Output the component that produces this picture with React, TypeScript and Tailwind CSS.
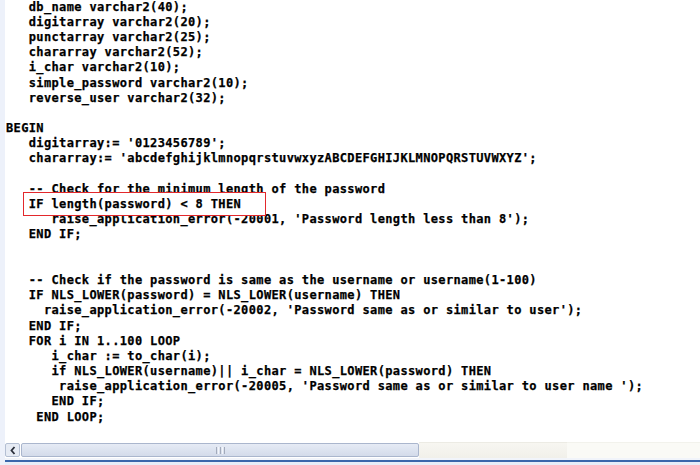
import React from 'react';

type Line = { indent: number; text: string; boxed?: boolean };

const lines: Line[] = [
  { indent: 3, text: 'db_name varchar2(40);' },
  { indent: 3, text: 'digitarray varchar2(20);' },
  { indent: 3, text: 'punctarray varchar2(25);' },
  { indent: 3, text: 'chararray varchar2(52);' },
  { indent: 3, text: 'i_char varchar2(10);' },
  { indent: 3, text: 'simple_password varchar2(10);' },
  { indent: 3, text: 'reverse_user varchar2(32);' },
  { indent: 0, text: '' },
  { indent: 0, text: 'BEGIN' },
  { indent: 3, text: "digitarray:= '0123456789';" },
  { indent: 3, text: "chararray:= 'abcdefghijklmnopqrstuvwxyzABCDEFGHIJKLMNOPQRSTUVWXYZ';" },
  { indent: 0, text: '' },
  { indent: 3, text: '-- Check for the minimum length of the password' },
  { indent: 3, text: 'IF length(password) < 8 THEN', boxed: true },
  { indent: 6, text: "raise_application_error(-20001, 'Password length less than 8');" },
  { indent: 3, text: 'END IF;' },
  { indent: 0, text: '' },
  { indent: 0, text: '' },
  { indent: 3, text: '-- Check if the password is same as the username or username(1-100)' },
  { indent: 3, text: 'IF NLS_LOWER(password) = NLS_LOWER(username) THEN' },
  { indent: 5, text: "raise_application_error(-20002, 'Password same as or similar to user');" },
  { indent: 3, text: 'END IF;' },
  { indent: 3, text: 'FOR i IN 1..100 LOOP' },
  { indent: 6, text: 'i_char := to_char(i);' },
  { indent: 6, text: 'if NLS_LOWER(username)|| i_char = NLS_LOWER(password) THEN' },
  { indent: 7, text: "raise_application_error(-20005, 'Password same as or similar to user name ');" },
  { indent: 6, text: 'END IF;' },
  { indent: 4, text: 'END LOOP;' },
];

function CodeLine({ line }: { line: Line }) {
  return (
    <div className={line.boxed ? 'relative z-10 h-[15.19px] whitespace-pre' : 'h-[15.19px] whitespace-pre'}>
      {' '.repeat(line.indent) + line.text}
    </div>
  );
}

function ScrollBar() {
  return (
    <div className="h-[16px] flex items-stretch bg-white">
      <div className="w-[15px] my-[1px] rounded-[2px] border border-[#b4bfd3] bg-[#e6ebf4] flex items-center justify-center">
        <svg width="6" height="9" viewBox="0 0 6 9">
          <polyline points="4.5,1 1.5,4.5 4.5,8" fill="none" stroke="#2a2f3a" strokeWidth="1.8" />
        </svg>
      </div>
      <div className="w-[398px] ml-[1px] my-[1px] rounded-[2px] border border-[#aab6cd] bg-gradient-to-b from-[#e6ebf5] to-[#d3dbea] flex items-center justify-center">
        <div className="flex gap-[1px] h-[7px]">
          <div className="w-[1px] bg-[#a3abbb]" />
          <div className="w-[1px] bg-[#f4f6fa]" />
          <div className="w-[1px] bg-[#a3abbb]" />
          <div className="w-[1px] bg-[#f4f6fa]" />
          <div className="w-[1px] bg-[#a3abbb]" />
        </div>
      </div>
      <div className="w-[148px] bg-gradient-to-b from-[#f7f6f1] to-[#f1f0ea] border-t border-[#ecebe4]" />
      <div className="flex-1 bg-[#fafaf6] border-t border-[#f2f2ec]" />
    </div>
  );
}

export default function App() {
  return (
    <div className="w-[700px] h-[465px] overflow-hidden flex bg-[#ebf0f9]">
      <div className="w-[5px] shrink-0 bg-[#edf1fa]" />
      <div className="flex-1 flex flex-col">
        <div
          className="h-[442px] bg-white relative overflow-hidden pl-[1px] text-[12px] tracking-[0.36px] font-bold text-[#000000] [-webkit-text-stroke:0.25px_#000]"
          style={{ fontFamily: '"DejaVu Sans Mono", "Liberation Mono", monospace' }}
        >
          <div className="mt-[-2.4px]">
            {lines.map((l, i) => (
              <CodeLine key={i} line={l} />
            ))}
          </div>
          <div className="absolute left-[18px] top-[192px] w-[243px] h-[24px] border border-[#e3282c] bg-white" />
        </div>
        <ScrollBar />
        <div className="h-[2px] bg-[#f1f4fa]" />
        <div className="h-[2px] bg-[#3a66ab]" />
        <div className="flex-1 bg-[#e7edf8]" />
      </div>
    </div>
  );
}
